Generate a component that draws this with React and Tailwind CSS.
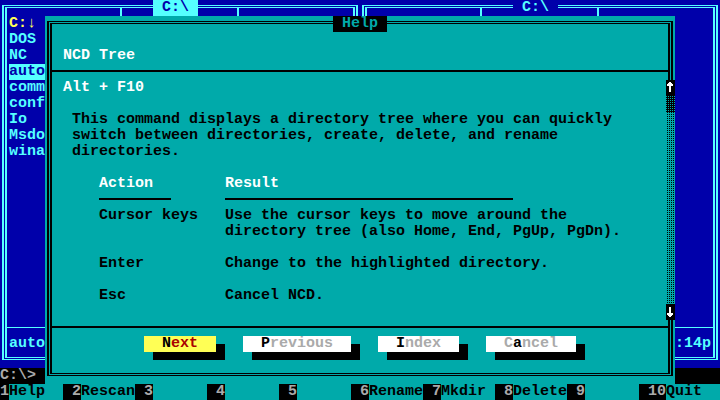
import React from "react";

const leftFiles = [
  { name: "C:↓", cls: "text-[#FFFF55]" },
  { name: "DOS" },
  { name: "NC" },
  { name: "autoexec bat", cur: true },
  { name: "command  com" },
  { name: "config   sys" },
  { name: "Io       sys" },
  { name: "Msdos    sys" },
  { name: "winaboot sys" },
];

const fkeys = [
  { n: "1", w: "w-[9px]", label: "Help" },
  { n: "2", w: "w-[18px]", label: "Rescan" },
  { n: "3", w: "w-[18px]", label: "" },
  { n: "4", w: "w-[18px]", label: "" },
  { n: "5", w: "w-[18px]", label: "" },
  { n: "6", w: "w-[18px]", label: "Rename" },
  { n: "7", w: "w-[18px]", label: "Mkdir" },
  { n: "8", w: "w-[18px]", label: "Delete" },
  { n: "9", w: "w-[18px]", label: "" },
  { n: "10", w: "w-[27px]", label: "Quit" },
];

const FileColumn = ({ files = [] }) => (
  <div className="w-[108px] shrink-0 pt-[8px] flex flex-col">
    {files.map((f) => (
      <div
        key={f.name}
        className={
          f.cur
            ? "h-4 whitespace-pre bg-[#55FFFF] text-[#0000AA]"
            : "h-4 whitespace-pre " + (f.cls || "")
        }
      >
        {f.name}
      </div>
    ))}
  </div>
);

const Divider = () => (
  <div className="w-[9px] shrink-0 pl-[3px]">
    <div className="w-[2px] h-full bg-[#55FFFF]" />
  </div>
);

const Panel = ({ active, files, status, right }) => (
  <div className="w-[360px] h-[368px] pt-[5px] px-[2px] pb-[8px]">
    <div className="relative h-full flex flex-col border-x-[5px] border-y-[3px] border-double border-[#55FFFF]">
      {/* panel title sits on the top border */}
      <span
        className={
          active
            ? "absolute -top-[8px] left-[146px] h-4 px-[9px] bg-[#55FFFF] text-[#0000AA]"
            : "absolute -top-[8px] left-[146px] h-4 px-[9px] bg-[#0000AA] text-[#55FFFF]"
        }
      >
        {"C:\\"}
      </span>

      <div className="flex h-[319px] px-[2px]">
        <FileColumn files={files} />
        <Divider />
        <FileColumn />
        <Divider />
        <FileColumn />
      </div>

      <div className="h-px bg-[#55FFFF]" />

      <div className={right ? "px-[2px] pt-[8px] flex justify-end" : "px-[2px] pt-[8px] flex"}>
        <span className="h-4 whitespace-pre">{status}</span>
      </div>
    </div>
  </div>
);

const Row = ({ className = "", children }) => (
  <div className={"h-4 shrink-0 whitespace-pre " + className}>{children}</div>
);

const Sep = () => (
  <div className="h-4 shrink-0 pt-[6px]">
    <div className="h-[2px] bg-black" />
  </div>
);

const TableRow = ({ a, b, head }) => (
  <div className={head ? "flex h-4 shrink-0 whitespace-pre pl-[47px] text-white" : "flex h-4 shrink-0 whitespace-pre pl-[47px]"}>
    <span className="w-[126px] shrink-0">{a}</span>
    <span>{b}</span>
  </div>
);

const Button = ({ bg, children }) => (
  <div className={"h-4 px-[18px] whitespace-pre shadow-[9px_8px_0_#000] " + bg}>{children}</div>
);

const UpArrow = () => (
  <svg width="9" height="16" viewBox="0 0 9 16" shapeRendering="crispEdges">
    <path fill="#fff" d="M3 2h2v10H3z M2 3h4v1H2z M1 4h6v2H1z" />
  </svg>
);

const DownArrow = () => (
  <svg width="9" height="16" viewBox="0 0 9 16" shapeRendering="crispEdges">
    <path fill="#fff" d="M3 3h2v10H3z M1 9h6v2H1z M2 11h4v1H2z" />
  </svg>
);

const Dialog = () => (
  <div className="absolute left-[45px] top-[16px] w-[630px] h-[368px] bg-[#00AAAA] pt-[5px] px-[2px] pb-[8px] text-black">
    <div className="h-full border-x-[5px] border-y-[3px] border-double border-black pt-[8px] flex flex-col">
      <Row />
      <Row className="pl-[11px] text-white">NCD Tree</Row>
      <Sep />
      <Row className="pl-[11px] text-white">Alt + F10</Row>
      <Row />
      <Row className="pl-[20px]">This command displays a directory tree where you can quickly</Row>
      <Row className="pl-[20px]">switch between directories, create, delete, and rename</Row>
      <Row className="pl-[20px]">directories.</Row>
      <Row />
      <TableRow head a="Action" b="Result" />
      <div className="flex h-4 shrink-0 pl-[47px] pt-[6px]">
        <div className="w-[72px] h-[2px] bg-black" />
        <div className="ml-[54px] w-[288px] h-[2px] bg-black" />
      </div>
      <TableRow a="Cursor keys" b="Use the cursor keys to move around the" />
      <TableRow a="" b="directory tree (also Home, End, PgUp, PgDn)." />
      <Row />
      <TableRow a="Enter" b="Change to the highlighted directory." />
      <Row />
      <TableRow a="Esc" b="Cancel NCD." />
      <Row />
      <Sep />
      <div className="flex h-4 shrink-0 justify-center gap-[27px]">
        <Button bg="bg-[#FFFF55]">
          <span className="text-black">N</span>
          <span className="text-[#AA0000]">ext</span>
        </Button>
        <Button bg="bg-white">
          <span className="text-black">P</span>
          <span className="text-[#AAAAAA]">revious</span>
        </Button>
        <Button bg="bg-white">
          <span className="text-black">I</span>
          <span className="text-[#AAAAAA]">ndex</span>
        </Button>
        <Button bg="bg-white">
          <span className="text-[#AAAAAA]">C</span>
          <span className="text-black">a</span>
          <span className="text-[#AAAAAA]">ncel</span>
        </Button>
      </div>
    </div>

    {/* title over the top border */}
    <span className="absolute top-0 left-[288px] h-4 px-[9px] bg-black text-[#00AAAA]">Help</span>

    {/* scrollbar over the right border */}
    <div className="absolute left-[621px] top-[64px] w-[9px] flex flex-col">
      <div className="h-4 bg-black">
        <UpArrow />
      </div>
      <div className="h-4 bg-[#00AAAA] bg-[conic-gradient(#000_75%,transparent_0)] bg-[length:2px_2px]" />
      <div className="h-[192px] bg-[#00AAAA] bg-[conic-gradient(#000_25%,transparent_0)] bg-[length:2px_2px]" />
      <div className="h-4 bg-black">
        <DownArrow />
      </div>
    </div>
  </div>
);

export default function App() {
  return (
    <div className="relative w-[720px] h-[400px] overflow-hidden bg-black font-['Liberation_Mono',monospace] text-[15px] leading-4 font-bold">
      {/* panels */}
      <div className="flex h-[368px] bg-[#0000AA] text-[#55FFFF]">
        <Panel active files={leftFiles} status="autoexec bat      201  6-15-94  12:14p" />
        <Panel right files={[]} status="command  com    54645  5-31-94  12:14p" />
      </div>

      {/* command line */}
      <div className="h-4 whitespace-pre text-[#AAAAAA]">{"C:\\>"}</div>

      {/* key bar */}
      <div className="flex h-4">
        {fkeys.map((k) => (
          <React.Fragment key={k.n}>
            <span className={k.w + " text-right bg-black text-[#AAAAAA]"}>{k.n}</span>
            <span className="w-[54px] whitespace-pre bg-[#00AAAA] text-black">{k.label}</span>
          </React.Fragment>
        ))}
      </div>

      <Dialog />
    </div>
  );
}
